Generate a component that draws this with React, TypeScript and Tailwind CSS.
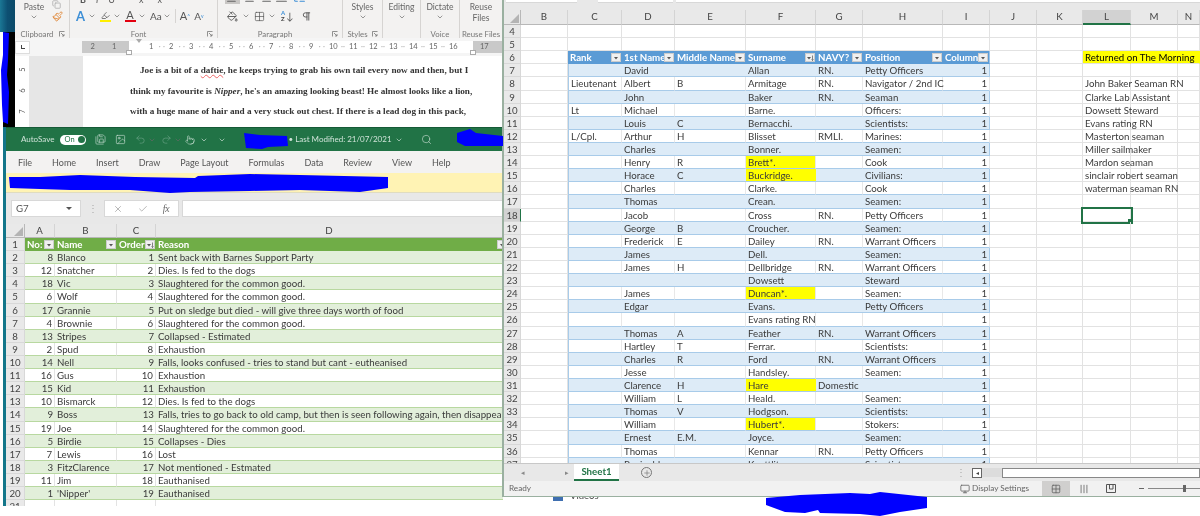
import { ReactNode } from 'react'
import clsx from 'clsx'
import {
  AlignCenter,
  AlignJustify,
  AlignLeft,
  AlignRight,
  ChevronDown,
  Check,
  Copy,
  Grid2x2,
  Highlighter,
  Image,
  ListTree,
  Monitor,
  PaintBucket,
  Paintbrush,
  Pilcrow,
  Plus,
  Pointer,
  Redo2,
  SaveAll,
  Search,
  Undo2,
  X,
} from 'lucide-react'

// word ribbon -----------------------------------------------------------------

function Chev({ className }: { className?: string }) {
  return <ChevronDown size={8} strokeWidth={2} className={clsx('shrink-0 text-[#666]', className)} />
}

function Launcher() {
  return (
    <svg width="6" height="6" viewBox="0 0 6 6" className="absolute right-[4px] bottom-[1px]">
      <path d="M0.5 5.5V0.5H5.5M2 2L5 5M5 3V5H3" fill="none" stroke="#777" strokeWidth="0.8" />
    </svg>
  )
}

function Group({
  label,
  launcher,
  className,
  children,
}: {
  label: string
  launcher?: boolean
  className: string
  children: ReactNode
}) {
  return (
    <div className={clsx('relative flex h-full shrink-0 flex-col border-r border-[#d6d4d2]', className)}>
      <div className="min-h-0 flex-1 overflow-hidden">{children}</div>
      <div className={clsx('h-[8px] text-center text-[7.8px] leading-[8px] whitespace-nowrap text-[#777]', launcher && 'pr-[10px]')}>
        {label}
      </div>
      {launcher && <Launcher />}
    </div>
  )
}

function VoiceBlock({ top, bottom }: { top: string; bottom?: string }) {
  return (
    <div className="flex flex-col items-center pt-[2px] text-[8.5px] leading-[11px] text-[#666]">
      <span>{top}</span>
      {bottom ? <span>{bottom}</span> : <Chev />}
    </div>
  )
}

function WordWindow() {
  const ruler = Array.from({ length: 16 }, (_, i) => i + 1)
  return (
    <div className="absolute top-0 left-0 flex h-[128px] w-[503px] bg-white font-['Lato',sans-serif]">
      <div className="flex w-[15px] shrink-0 flex-col">
        <div className="h-[32px] bg-gradient-to-r from-[#1b7795] via-[#0d4f72] to-[#0b4a68]" />
        <div className="flex-1 bg-gradient-to-r from-white from-20% to-black to-20%" />
      </div>
      <div className="flex min-w-0 flex-1 flex-col">
        <div className="flex h-[38px] shrink-0 bg-[#f3f2f1] text-[#555]">
          <Group label="Clipboard" launcher className="w-[55px]">
            <div className="flex flex-col items-center pt-[2px] pr-[16px] text-[8.5px] leading-[11px] text-[#666]">
              <span>Paste</span>
              <Chev />
            </div>
            <Copy size={9} className="absolute top-0 left-[37px] text-[#aaa]" />
            <Paintbrush size={11} className="absolute top-[11px] left-[37px] text-[#e08a3c]" />
          </Group>
          <Group label="Font" launcher className="w-[148px]">
            <div className="flex h-[4px] items-end gap-[10px] overflow-hidden pl-[10px] text-[9px] leading-[9px]">
              <b>B</b>
              <i>I</i>
              <u>U</u>
              <span className="ml-[14px]">x</span>
              <span className="ml-[4px]">x</span>
            </div>
            <div className="flex items-center pt-[5px] pl-[6px]">
              <span className="text-[13px] leading-[14px] font-bold text-[#3d8fd6]">A</span>
              <Chev className="ml-[3px]" />
              <div className="ml-[3px] flex w-[12px] flex-col items-center">
                <Highlighter size={9} />
                <div className="h-[2px] w-[11px] bg-[#ffef00]" />
              </div>
              <Chev className="ml-[2px]" />
              <div className="ml-[3px] flex w-[12px] flex-col items-center">
                <span className="text-[11px] leading-[10px]">A</span>
                <div className="h-[2px] w-[11px] bg-[#e3000f]" />
              </div>
              <Chev className="ml-[2px]" />
              <span className="ml-[4px] text-[10px] leading-[12px]">Aa</span>
              <Chev className="ml-[1px]" />
              <div className="ml-[4px] h-[14px] w-px bg-[#d6d4d2]" />
              <span className="ml-[4px] text-[11px] leading-[12px]">
                A<sup className="text-[5px] text-[#3d8fd6]">^</sup>
              </span>
              <span className="ml-[4px] text-[10px] leading-[12px]">
                A<sup className="text-[5px] text-[#3d8fd6]">v</sup>
              </span>
            </div>
          </Group>
          <Group label="Paragraph" launcher className="w-[125px]">
            <div className="flex h-[4px] items-end gap-[3px] overflow-hidden pl-[7px] text-[#666]">
              <div className="bg-[#c8c6c4] px-[1px]">
                <AlignLeft size={13} />
              </div>
              <AlignCenter size={13} />
              <AlignRight size={13} />
              <AlignJustify size={13} />
              <ListTree size={13} className="ml-[2px] text-[#3d8fd6]" />
            </div>
            <div className="flex items-center pt-[6px] pl-[9px]">
              <PaintBucket size={11} />
              <Chev className="ml-[4px]" />
              <Grid2x2 size={11} className="ml-[4px]" strokeWidth={1.5} />
              <Chev className="ml-[3px]" />
              <div className="ml-[5px] flex flex-col text-[6px] leading-[6px] font-bold text-[#3d8fd6]">
                <span>A</span>
                <span className="text-[#444]">Z</span>
              </div>
              <span className="ml-[1px] text-[10px] leading-[12px]">↓</span>
              <Pilcrow size={11} className="ml-[7px]" />
            </div>
          </Group>
          <Group label="Styles" launcher className="w-[40px]">
            <VoiceBlock top="Styles" />
          </Group>
          <Group label="" className="w-[38px]">
            <VoiceBlock top="Editing" />
          </Group>
          <Group label="Voice" className="w-[39px]">
            <VoiceBlock top="Dictate" />
          </Group>
          <Group label="Reuse Files" className="w-[43px]">
            <VoiceBlock top="Reuse" bottom="Files" />
          </Group>
        </div>
        <div className="flex h-[18px] shrink-0 items-center bg-[#f5f5f5]">
          <div className="flex h-[13px] w-[15px] shrink-0 items-center justify-center border border-[#ddd] bg-white">
            <div className="h-[4px] w-[4px] border-b border-l border-[#444]" />
          </div>
          <div className="relative ml-[52px] flex h-[12px] flex-1 text-[7.5px] leading-[12px] text-[#666]">
            <div className="flex w-[47px] shrink-0 justify-around bg-[#c9c9c9] pr-[4px]">
              <span>2</span>
              <span>1</span>
            </div>
            <div className="flex w-[344px] shrink-0 justify-between bg-white pr-[4px] pl-[20px]">
              {ruler.map((n) => (
                <span key={n} className="flex w-[21px] justify-between">
                  {n}
                  {n < 16 && <span className="pl-[3px] text-[#aaa]">·</span>}
                  {n < 16 && <span className="pr-[4px] text-[#aaa]">·</span>}
                </span>
              ))}
            </div>
            <div className="flex-1 bg-[#c9c9c9] pl-[7px]">17</div>
            {/* indent markers */}
            <div className="absolute -top-[2px] left-[54px] h-0 w-0 border-x-[3px] border-t-[4px] border-x-transparent border-t-[#aaa]" />
            <div className="absolute -bottom-[2px] left-[44px] h-[5px] w-[6px] border border-[#aaa] bg-white" />
            <div className="absolute -bottom-[2px] left-[388px] h-[5px] w-[6px] border border-[#aaa] bg-white" />
          </div>
        </div>
        <div className="flex min-h-0 flex-1">
          <div className="flex w-[14px] shrink-0 flex-col items-center gap-[10px] bg-white pt-[8px] text-[7.5px] leading-[11px] text-[#555]">
            <span className="-rotate-90">5</span>
            <span className="-rotate-90">6</span>
            <span className="-rotate-90">7</span>
          </div>
          <div className="w-[54px] shrink-0 bg-[#e6e6e6]" />
          <div className="min-w-0 flex-1 bg-white pt-[4px] pl-[47px] font-['Liberation_Serif',serif] text-[9.2px] leading-[20.5px] font-bold text-[#333]">
            <p className="pl-[10px] whitespace-nowrap">
              Joe is a bit of a <span className="underline decoration-[#e66] decoration-wavy decoration-[0.5px]">daftie</span>, he keeps trying to grab his own tail every now and then, but I
            </p>
            <p className="whitespace-nowrap">
              think my favourite is <i>Nipper</i>, he's an amazing looking beast! He almost looks like a lion,
            </p>
            <p className="whitespace-nowrap">with a huge mane of hair and a very stuck out chest. If there is a lead dog in this pack,</p>
          </div>
        </div>
      </div>
    </div>
  )
}

// sheets ----------------------------------------------------------------------

function FilterBtn({ sorted, className }: { sorted?: boolean; className?: string }) {
  return (
    <div className={clsx('absolute top-[2px] flex h-[9px] w-[10px] items-center justify-center border border-[#ccc] bg-[#f0f0f0]', className)}>
      <svg width="8" height="6" viewBox="0 0 8 6">
        <path d={sorted ? 'M1 2H5L3 4.5Z' : 'M2 2H6L4 4.5Z'} fill="#555" />
        {sorted && <path d="M6.5 0.5V5.5M5.5 4.5L6.5 5.5L7.5 4.5" fill="none" stroke="#555" strokeWidth="0.7" />}
      </svg>
    </div>
  )
}

function RowHead({ n, active }: { n: number; active?: boolean }) {
  return (
    <div
      className={clsx(
        'h-full shrink-0 border-r border-b border-[#d8d8d8] text-center text-[#444]',
        active ? 'border-r-[#217346] bg-[#d2d2d2]' : 'bg-[#e9e9e9]',
      )}
    >
      {n}
    </div>
  )
}

function ColHead({ w, label, active }: { w: string; label?: string; active?: boolean }) {
  return (
    <div
      className={clsx(
        'h-full shrink-0 border-r border-[#d4d4d4] text-center text-[#444]',
        w,
        active ? 'border-b-2 border-b-[#217346] bg-[#d2d2d2]' : 'border-b border-b-[#b8b8b8]',
      )}
    >
      {label}
    </div>
  )
}

function CornerHead({ w }: { w: string }) {
  return (
    <div className={clsx('flex h-full shrink-0 items-end justify-end border-r border-b border-[#b8b8b8] pr-[1px] pb-[1px]', w)}>
      <div className="h-0 w-0 border-b-[9px] border-l-[9px] border-b-[#b4b4b4] border-l-transparent" />
    </div>
  )
}

function Cell({ w, className, children }: { w: string; className?: string; children?: ReactNode }) {
  return <div className={clsx('h-full shrink-0 border-b px-[2px] whitespace-nowrap', w, className)}>{children}</div>
}

const leftRows: [number, string, number, string][] = [
  [8, 'Blanco', 1, 'Sent back with Barnes Support Party'],
  [12, 'Snatcher', 2, 'Dies. Is fed to the dogs'],
  [18, 'Vic', 3, 'Slaughtered for the common good.'],
  [6, 'Wolf', 4, 'Slaughtered for the common good.'],
  [17, 'Grannie', 5, 'Put on sledge but died - will give three days worth of food'],
  [4, 'Brownie', 6, 'Slaughtered for the common good.'],
  [13, 'Stripes', 7, 'Collapsed - Estimated'],
  [2, 'Spud', 8, 'Exhaustion'],
  [14, 'Nell', 9, 'Falls, looks confused - tries to stand but cant - eutheanised'],
  [16, 'Gus', 10, 'Exhaustion'],
  [15, 'Kid', 11, 'Exhaustion'],
  [10, 'Bismarck', 12, 'Dies. Is fed to the dogs'],
  [9, 'Boss', 13, 'Falls, tries to go back to old camp, but then is seen following again, then disappears'],
  [19, 'Joe', 14, 'Slaughtered for the common good.'],
  [5, 'Birdie', 15, 'Collapses - Dies'],
  [7, 'Lewis', 16, 'Lost'],
  [3, 'FitzClarence', 17, 'Not mentioned - Estmated'],
  [11, 'Jim', 18, 'Eauthanised'],
  [1, "'Nipper'", 19, 'Eauthanised'],
]

function ExcelLeft() {
  const tabs = ['File', 'Home', 'Insert', 'Draw', 'Page Layout', 'Formulas', 'Data', 'Review', 'View', 'Help']
  return (
    <div className="absolute top-[127px] left-[3px] flex h-[379px] w-[500px] flex-col overflow-hidden border-l-[3px] border-[#13768a] bg-white font-['Lato',sans-serif] text-[9.7px] leading-[13px]">
      <div className="flex h-[24px] shrink-0 items-center border-t border-[#165a37] bg-[#217346] pl-[15px] text-[8px] text-[#cfe3d8]">
        <span>AutoSave</span>
        <div className="ml-[6px] flex h-[10px] w-[26px] shrink-0 items-center justify-between rounded-full bg-white pr-[1px] pl-[4px] text-[7.5px] text-[#217346]">
          On
          <div className="h-[7px] w-[7px] rounded-full bg-[#217346]" />
        </div>
        <SaveAll size={11} className="ml-[9px]" strokeWidth={1.3} />
        <Image size={11} className="ml-[9px]" strokeWidth={1.3} />
        <Undo2 size={11} className="ml-[9px] text-[#6fa58a]" strokeWidth={1.3} />
        <Chev className="ml-[2px] text-[#6fa58a]" />
        <Redo2 size={11} className="ml-[5px] text-[#6fa58a]" strokeWidth={1.3} />
        <Chev className="ml-[2px] text-[#6fa58a]" />
        <Pointer size={10} className="ml-[3px]" strokeWidth={1.3} />
        <Chev className="ml-[5px] text-[#cfe3d8]" />
        <Chev className="ml-[10px] text-[#cfe3d8]" />
        <span className="ml-[62px] whitespace-nowrap">• Last Modified: 21/07/2021</span>
        <Chev className="ml-[3px] text-[#cfe3d8]" />
        <Search size={11} className="ml-[18px]" strokeWidth={1.3} />
      </div>
      <div className="flex h-[22px] shrink-0 items-center gap-[20px] bg-[#f3f2f1] pl-[12px] text-[9px] text-[#555]">
        {tabs.map((t) => (
          <span key={t} className="whitespace-nowrap">
            {t}
          </span>
        ))}
      </div>
      <div className="h-[20px] shrink-0 border-b border-[#e0dcc0] bg-[#fff3b4]" />
      <div className="flex h-[31px] shrink-0 items-center bg-[#e8e8e8] pl-[5px] text-[#555]">
        <div className="flex h-[17px] w-[70px] items-center justify-between border border-[#d8d8d8] bg-white pr-[8px] pl-[4px]">
          G7
          <div className="h-0 w-0 border-x-[3px] border-t-[3px] border-x-transparent border-t-[#555]" />
        </div>
        <span className="w-[23px] text-center text-[#aaa]">⋮</span>
        <div className="flex h-[17px] w-[75px] items-center justify-around border border-[#d8d8d8] bg-white px-[1px]">
          <X size={10} className="text-[#aaa]" />
          <Check size={10} className="text-[#aaa]" />
          <i className="font-['Liberation_Serif',serif] text-[#666]">fx</i>
        </div>
        <div className="ml-[3px] h-[17px] flex-1 border border-[#d8d8d8] bg-white" />
      </div>
      <div className="flex h-[14px] shrink-0 bg-[#e9e9e9]">
        <CornerHead w="w-[19px]" />
        <ColHead w="w-[30px]" label="A" />
        <ColHead w="w-[62px]" label="B" />
        <ColHead w="w-[39px]" label="C" />
        <ColHead w="flex-1" label="D" />
      </div>
      <div className="flex h-[13.12px] shrink-0">
        <div className="w-[19px] shrink-0">
          <RowHead n={1} />
        </div>
        <div className="flex min-w-0 flex-1 bg-[#70ad47] font-bold text-white">
          <Cell w="relative w-[30px]" className="border-[#70ad47]">
            No:
            <FilterBtn className="right-[1px]" />
          </Cell>
          <Cell w="relative w-[62px]" className="border-[#70ad47]">
            Name
            <FilterBtn className="right-[1px]" />
          </Cell>
          <Cell w="relative w-[39px]" className="border-[#70ad47]">
            Order
            <FilterBtn sorted className="right-[1px]" />
          </Cell>
          <Cell w="relative flex-1" className="border-[#70ad47]">
            Reason
            <FilterBtn className="-right-[4px]" />
          </Cell>
        </div>
      </div>
      {leftRows.map(([no, name, order, reason], i) => {
        const band = i % 2 === 0
        const c = clsx('border-[#b8d8a0]', band ? 'bg-[#e2efda]' : 'border-r-[#e3e3e3]')
        return (
          <div key={name} className="flex h-[13.12px] shrink-0 text-[#3a3a3a]">
            <div className="w-[19px] shrink-0">
              <RowHead n={i + 2} />
            </div>
            <Cell w="w-[30px]" className={clsx(c, 'text-right', !band && 'border-r')}>
              {no}
            </Cell>
            <Cell w="w-[62px]" className={clsx(c, !band && 'border-r')}>
              {name}
            </Cell>
            <Cell w="w-[39px]" className={clsx(c, 'text-right', !band && 'border-r')}>
              {order}
            </Cell>
            <Cell w="min-w-0 flex-1 overflow-hidden" className={c}>
              {reason}
            </Cell>
          </div>
        )
      })}
      <div className="flex h-[13px] shrink-0">
        <div className="w-[19px] shrink-0">
          <RowHead n={21} />
        </div>
        <Cell w="w-[30px]" className="border-r border-[#e3e3e3]" />
        <Cell w="w-[62px]" className="border-r border-[#e3e3e3]" />
        <Cell w="w-[39px]" className="border-r border-[#e3e3e3]" />
      </div>
    </div>
  )
}

type Crew = {
  rank?: string
  first?: string
  middle?: string
  sur: string
  navy?: string
  pos?: string
  hl?: boolean
}

const crew: Crew[] = [
  { first: 'David', sur: 'Allan', navy: 'RN.', pos: 'Petty Officers' },
  { rank: 'Lieutenant', first: 'Albert', middle: 'B', sur: 'Armitage', navy: 'RN.', pos: 'Navigator / 2nd IC' },
  { first: 'John', sur: 'Baker', navy: 'RN.', pos: 'Seaman' },
  { rank: 'Lt', first: 'Michael', sur: 'Barne.', pos: 'Officers:' },
  { first: 'Louis', middle: 'C', sur: 'Bernacchi.', pos: 'Scientists:' },
  { rank: 'L/Cpl.', first: 'Arthur', middle: 'H', sur: 'Blisset', navy: 'RMLI.', pos: 'Marines:' },
  { first: 'Charles', sur: 'Bonner.', pos: 'Seamen:' },
  { first: 'Henry', middle: 'R', sur: 'Brett*.', pos: 'Cook', hl: true },
  { first: 'Horace', middle: 'C', sur: 'Buckridge.', pos: 'Civilians:', hl: true },
  { first: 'Charles', sur: 'Clarke.', pos: 'Cook' },
  { first: 'Thomas', sur: 'Crean.', pos: 'Seamen:' },
  { first: 'Jacob', sur: 'Cross', navy: 'RN.', pos: 'Petty Officers' },
  { first: 'George', middle: 'B', sur: 'Croucher.', pos: 'Seamen:' },
  { first: 'Frederick', middle: 'E', sur: 'Dailey', navy: 'RN.', pos: 'Warrant Officers' },
  { first: 'James', sur: 'Dell.', pos: 'Seamen:' },
  { first: 'James', middle: 'H', sur: 'Dellbridge', navy: 'RN.', pos: 'Warrant Officers' },
  { sur: 'Dowsett', pos: 'Steward' },
  { first: 'James', sur: 'Duncan*.', pos: 'Seamen:', hl: true },
  { first: 'Edgar', sur: 'Evans.', pos: 'Petty Officers' },
  { sur: 'Evans rating RN' },
  { first: 'Thomas', middle: 'A', sur: 'Feather', navy: 'RN.', pos: 'Warrant Officers' },
  { first: 'Hartley', middle: 'T', sur: 'Ferrar.', pos: 'Scientists:' },
  { first: 'Charles', middle: 'R', sur: 'Ford', navy: 'RN.', pos: 'Warrant Officers' },
  { first: 'Jesse', sur: 'Handsley.', pos: 'Seamen:' },
  { first: 'Clarence', middle: 'H', sur: 'Hare', navy: 'Domestic', hl: true },
  { first: 'William', middle: 'L', sur: 'Heald.', pos: 'Seamen:' },
  { first: 'Thomas', middle: 'V', sur: 'Hodgson.', pos: 'Scientists:' },
  { first: 'William', sur: 'Hubert*.', pos: 'Stokers:', hl: true },
  { first: 'Ernest', middle: 'E.M.', sur: 'Joyce.', pos: 'Seamen:' },
  { first: 'Thomas', sur: 'Kennar', navy: 'RN.', pos: 'Petty Officers' },
  { first: 'Reginald', sur: 'Koettlitz.', pos: 'Scientists:' },
]

const returned: Record<number, string> = {
  8: 'John Baker Seaman RN',
  9: 'Clarke Lab Assistant',
  10: 'Dowsett Steward',
  11: 'Evans rating RN',
  12: 'Masterton seaman',
  13: 'Miller sailmaker',
  14: 'Mardon seaman',
  15: 'sinclair robert seaman',
  16: 'waterman seaman RN',
}

const grid = 'border-r border-[#e2e2e2] border-b-[#e2e2e2]'

function OuterCells({ row }: { row: number }) {
  const yellow = row === 6
  const selected = row === 18
  return (
    <>
      <Cell w="w-[47px]" className={grid} />
      <Cell w="w-[46px]" className={grid} />
      <Cell
        w="relative z-10 w-[48px]"
        className={clsx(grid, yellow && 'border-[#ffff00] bg-[#ffff00]', selected && 'outline-2 outline-[#217346]')}
      >
        {yellow ? 'Returned on The Morning' : returned[row]}
        {selected && <div className="absolute -right-[2px] -bottom-[2px] h-[4px] w-[4px] bg-[#217346]" />}
      </Cell>
      <Cell w="w-[47px]" className={clsx(grid, yellow && 'border-[#ffff00] bg-[#ffff00]')} />
      <Cell w="flex-1" className={clsx(grid, yellow && 'border-[#ffff00] bg-[#ffff00]')} />
    </>
  )
}

function ExcelRight() {
  const heads: [string, string][] = [
    ['w-[54px]', 'Rank'],
    ['w-[53px]', '1st Name'],
    ['w-[71px]', 'Middle Name'],
    ['w-[70px]', 'Surname'],
    ['w-[47px]', 'NAVY?'],
    ['w-[80px]', 'Position'],
    ['w-[47px]', 'Column'],
  ]
  return (
    <div className="absolute top-0 left-[502px] flex h-[497px] w-[698px] flex-col overflow-hidden border-l-2 border-b border-[#9ab0a0] bg-white font-['Lato',sans-serif] text-[9.7px] leading-[13px]">
      <div className="flex h-[10px] shrink-0 items-start gap-[3px] bg-[#e8e8e8] pl-[2px]">
        <div className="h-[3px] w-[71px] border-b border-[#d8d8d8] bg-white" />
        <div className="ml-[18px] h-[3px] w-[75px] border-b border-[#d8d8d8] bg-white" />
        <div className="h-[3px] flex-1 border-b border-[#d8d8d8] bg-white" />
      </div>
      <div className="flex h-[15px] shrink-0 bg-[#e9e9e9]">
        <CornerHead w="w-[17px]" />
        {['B', 'C', 'D', 'E', 'F', 'G', 'H', 'I', 'J', 'K'].map((c, i) => (
          <ColHead
            key={c}
            label={c}
            w={
              [
                'w-[47px]',
                'w-[54px]',
                'w-[53px]',
                'w-[71px]',
                'w-[70px]',
                'w-[47px]',
                'w-[80px]',
                'w-[47px]',
                'w-[47px]',
                'w-[46px]',
              ][i]
            }
          />
        ))}
        <ColHead w="w-[48px]" label="L" active />
        <ColHead w="w-[47px]" label="M" />
        <ColHead w="flex-1" label="N" />
      </div>
      <div className="min-h-0 flex-1 overflow-hidden">
        {[4, 5].map((n) => (
          <div key={n} className="flex h-[13.12px]">
            <div className="w-[17px] shrink-0">
              <RowHead n={n} />
            </div>
            <Cell w="w-[47px]" className={grid} />
            {heads.map(([w]) => (
              <Cell key={w} w={w} className={grid} />
            ))}
            <OuterCells row={n} />
          </div>
        ))}
        <div className="flex h-[13.12px]">
          <div className="w-[17px] shrink-0">
            <RowHead n={6} />
          </div>
          <Cell w="w-[47px]" className={grid} />
          {heads.map(([w, label]) => (
            <Cell
              key={label}
              w={clsx('relative overflow-hidden', w)}
              className={clsx(
                'border-[#5b9bd5] bg-[#5b9bd5] font-bold text-white',
                label === 'Column' && 'border-r border-r-[#9dc3e6]',
              )}
            >
              {label}
              <FilterBtn sorted={label === 'Surname'} className="right-[1px]" />
            </Cell>
          ))}
          <OuterCells row={6} />
        </div>
        {crew.map((p, i) => {
          const row = i + 7
          const band = row % 2 === 1
          const c = clsx('border-[#a8cbe9]', band ? 'bg-[#ddebf7]' : 'border-r border-r-[#e8e8e8]')
          return (
            <div key={row} className="flex h-[13.12px] text-[#3a3a3a]">
              <div className="w-[17px] shrink-0">
                <RowHead n={row} active={row === 18} />
              </div>
              <Cell w="w-[47px]" className={grid} />
              <Cell w="w-[54px] border-l border-l-[#a8cbe9]" className={c}>
                {p.rank}
              </Cell>
              <Cell w="w-[53px]" className={c}>
                {p.first}
              </Cell>
              <Cell w="w-[71px]" className={c}>
                {p.middle}
              </Cell>
              <Cell w="w-[70px]" className={clsx(c, p.hl && 'bg-[#ffff00]')}>
                {p.sur}
              </Cell>
              <Cell w="relative z-10 w-[47px]" className={c}>
                {p.navy}
              </Cell>
              <Cell w="w-[80px]" className={c}>
                {p.pos}
              </Cell>
              <Cell w="w-[47px] border-r border-r-[#a8cbe9]" className={clsx(c, 'text-right')}>
                1
              </Cell>
              <OuterCells row={row} />
            </div>
          )
        })}
      </div>
      <div className="flex h-[18px] shrink-0 items-center border-t border-[#c8c8c8] bg-[#e8e8e8] text-[#888]">
        <div className="ml-[17px] flex w-[48px] justify-between text-[7px]">
          <span>◂</span>
          <span>▸</span>
        </div>
        <div className="ml-[5px] flex h-[17px] w-[45px] items-center justify-center border-b-2 border-[#217346] bg-white font-bold text-[#217346]">
          Sheet1
        </div>
        <div className="ml-[22px] flex h-[11px] w-[11px] items-center justify-center rounded-full border border-[#777] text-[#777]">
          <Plus size={8} />
        </div>
        <span className="ml-[304px] text-[#aaa]">⋮</span>
        <div className="ml-[6px] flex h-[10px] w-[10px] items-center justify-center border border-[#666] bg-white text-[6px] text-[#444]">◂</div>
        <div className="h-[9px] w-[20px] bg-[#dcdcdc]" />
        <div className="h-[10px] flex-1 border border-[#888] bg-white" />
      </div>
      <div className="flex h-[15px] shrink-0 items-center bg-[#f1f1f1] pl-[5px] text-[8.2px] text-[#666]">
        Ready
        <Monitor size={10} className="ml-[429px]" />
        <span className="ml-[2px] whitespace-nowrap">Display Settings</span>
        <div className="ml-[13px] flex h-full w-[28px] items-center justify-center bg-[#d0cfce]">
          <Grid2x2 size={10} />
        </div>
        <AlignJustify size={10} className="ml-[9px] rotate-90" />
        <svg width="10" height="9" viewBox="0 0 10 9" className="ml-[17px]">
          <path d="M0.5 0.5H9.5V8.5H0.5ZM3.5 0.5V5H7V0.5" fill="none" stroke="#555" />
        </svg>
        <div className="ml-[23px] h-px w-[5px] bg-[#666]" />
        <div className="relative ml-[4px] h-px flex-1 bg-[#888]">
          <div className="absolute -top-[3px] left-[35px] h-[7px] w-[3px] bg-[#666]" />
        </div>
      </div>
    </div>
  )
}

export default function App() {
  return (
    <div className="relative h-[516px] w-[1200px] overflow-hidden bg-white blur-[0.35px]">
      <WordWindow />
      <ExcelLeft />
      <div className="absolute top-[489px] left-[553px] flex items-center gap-[7px] font-['Lato',sans-serif] text-[9.5px] leading-[14px] text-[#444]">
        <div className="h-[10px] w-[10px] bg-[#3f6fb0]" />
        Videos
      </div>
      <ExcelRight />

      {/* redaction scribbles */}
      <svg className="absolute top-0 left-0" width="1200" height="516" viewBox="0 0 1200 516" fill="#0000ff">
        <path d="M3 32L9 33L8 60L7 75L9 92L8 124L3 122L2 105L1 70L3 55Z" />
        <path d="M244 133L260 135L287 136L288 146L268 147L262 149L246 148Z" />
        <path d="M457 133L470 129L476 133L503 136V146L465 146L457 142Z" />
        <path d="M9 177L40 177L80 175L135 177L195 178L198 176L250 174L300 175L388 177L388 188L360 192L300 190L250 191L190 192L170 193L130 190L70 190L40 189L10 188Z" />
        <path d="M766 498L800 495L850 493L870 494L880 492L927 497L927 508L900 512L880 516L860 514L820 513L818 510L805 513L785 512L766 505Z" />
      </svg>
    </div>
  )
}
